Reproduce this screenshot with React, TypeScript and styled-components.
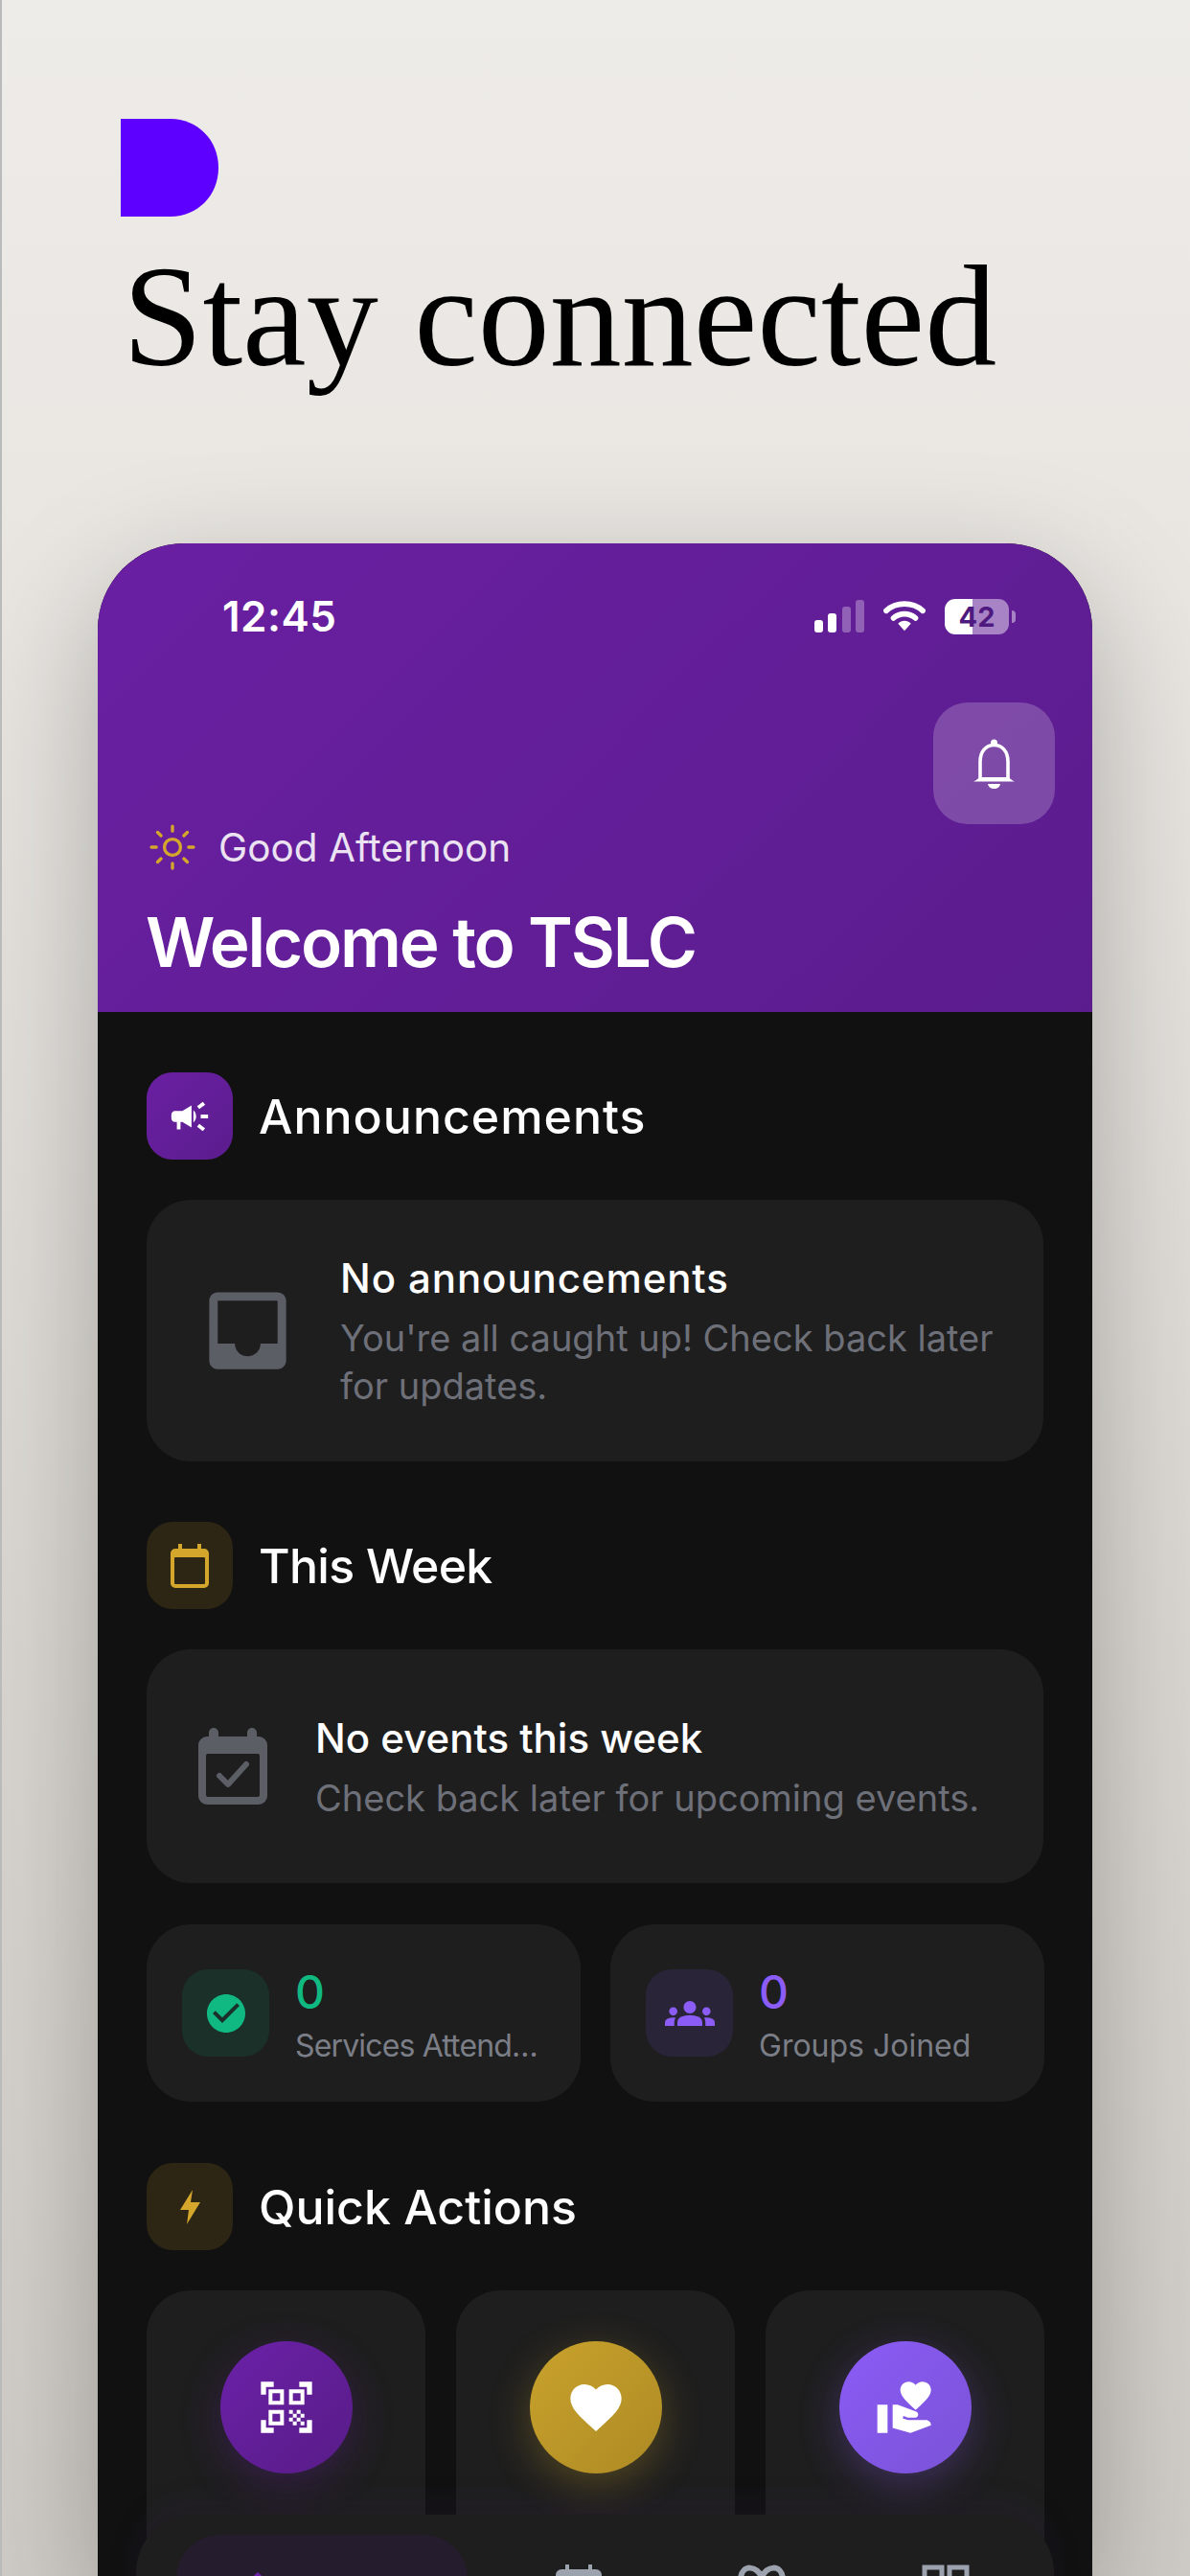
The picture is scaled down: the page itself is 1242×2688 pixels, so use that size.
import styled, { createGlobalStyle } from "styled-components";
import {
  MdCampaign,
  MdInbox,
  MdCheckCircle,
  MdGroups,
  MdQrCodeScanner,
  MdFavorite,
  MdVolunteerActivism,
  MdHome,
} from "react-icons/md";
import { IoSunnyOutline } from "react-icons/io5";

const GlobalStyle = createGlobalStyle`
  html, body {
    margin: 0;
    padding: 0;
    height: 2688px;
    overflow: hidden;
    background: #d8d5d0;
  }
  * { box-sizing: border-box; }
`;

const Page = styled.div`
  width: 1242px;
  height: 2688px;
  overflow: hidden;
  display: flex;
  flex-direction: column;
  padding: 124px 102px 0 126px;
  border-left: 2px solid #b9bbbb;
  background: linear-gradient(180deg, #eeece8 0%, #e8e5e1 25%, #d9d6d1 65%, #cfcbc6 100%);
  font-family: Inter, "Noto Sans", sans-serif;
`;

const Logo = styled.svg`
  width: 102px;
  height: 102px;
  margin-left: -2px;
  flex: none;
`;

const Headline = styled.h1`
  margin: 29px 0 0 0;
  font-family: "Liberation Serif", serif;
  font-weight: 400;
  font-size: 150px;
  line-height: 150px;
  color: #000;
  white-space: nowrap;
`;

const Phone = styled.div`
  width: 1038px;
  margin: 162px 0 0 -26px;
  flex: 1;
  border-radius: 90px 90px 0 0;
  background: #111111;
  box-shadow: 0 40px 130px rgba(0, 0, 0, 0.26);
  position: relative;
  overflow: hidden;
`;

const Header = styled.header`
  height: 489px;
  padding: 50px 39px 0 51px;
  display: flex;
  flex-direction: column;
  background: linear-gradient(135deg, #6a1fa2 0%, #5b1d8e 100%);
`;

const StatusBar = styled.div`
  height: 52px;
  display: flex;
  align-items: center;
  justify-content: space-between;
  padding: 0 48px 0 79px;
`;

const Time = styled.div`
  color: #fff;
  font-size: 44px;
  font-weight: 600;
  letter-spacing: 0.5px;
`;

const StatusIcons = styled.div`
  display: flex;
  align-items: center;
  gap: 20px;
`;

const Battery = styled.div`
  position: relative;
  width: 67px;
  height: 37px;
  border-radius: 11px;
  background: linear-gradient(90deg, #fff 0%, #fff 43%, rgba(255, 255, 255, 0.45) 43%);
  color: #4f1a80;
  font-size: 29px;
  font-weight: 700;
  line-height: 37px;
  text-align: center;
  &::after {
    content: "";
    position: absolute;
    right: -7px;
    top: 12px;
    width: 4px;
    height: 13px;
    border-radius: 0 4px 4px 0;
    background: rgba(255, 255, 255, 0.45);
  }
`;

const BellRow = styled.div`
  display: flex;
  justify-content: flex-end;
  margin-top: 64px;
`;

const BellButton = styled.div`
  width: 127px;
  height: 127px;
  border-radius: 36px;
  background: rgba(255, 255, 255, 0.2);
  display: flex;
  align-items: center;
  justify-content: center;
  color: #fff;
`;

const Greeting = styled.div`
  display: flex;
  align-items: center;
  gap: 21px;
  height: 48px;
  font-size: 40.5px;
  color: rgba(255, 255, 255, 0.88);
`;

const Welcome = styled.h2`
  margin: 32px 0 0 -1px;
  font-size: 71px;
  line-height: 86px;
  font-weight: 600;
  letter-spacing: -2.2px;
  color: #fff;
`;

const Content = styled.div`
  padding: 63px 51px 0;
  display: flex;
  flex-direction: column;
`;

const Section = styled.section`
  margin-bottom: 63px;
`;

const SectionHead = styled.div`
  display: flex;
  align-items: center;
  gap: 27px;
  margin-bottom: 42px;
`;

const HeadIcon = styled.div<{ $bg: string; $color: string }>`
  width: 90px;
  height: 91px;
  border-radius: 27px;
  background: ${({ $bg }) => $bg};
  color: ${({ $color }) => $color};
  display: flex;
  align-items: center;
  justify-content: center;
`;

const SectionTitle = styled.div<{ $tracking?: number }>`
  font-size: 50px;
  font-weight: 500;
  color: #fff;
  letter-spacing: ${({ $tracking }) => $tracking ?? 0}px;
`;

const EmptyCard = styled.div<{ $height: number; $gap: number; $left: number }>`
  height: ${({ $height }) => $height}px;
  padding-left: ${({ $left }) => $left}px;
  display: flex;
  align-items: center;
  gap: ${({ $gap }) => $gap}px;
  border-radius: 46px;
  background: #1e1e1e;
  color: #5c5e66;
`;

const EmptyBody = styled.div`
  padding-top: 3px;
`;

const EmptyTitle = styled.div<{ $tracking?: number }>`
  font-size: 42px;
  line-height: 50px;
  font-weight: 500;
  color: #fff;
  margin-bottom: 12px;
  letter-spacing: ${({ $tracking }) => $tracking ?? 0}px;
`;

const EmptyText = styled.div`
  font-size: 38px;
  line-height: 50px;
  color: #6e7079;
  white-space: nowrap;
`;

const Stats = styled.div`
  display: grid;
  grid-template-columns: 453px 453px;
  gap: 31px;
  margin: -20px 0 64px;
`;

const StatCard = styled.div`
  height: 185px;
  padding: 0 20px 0 37px;
  display: flex;
  align-items: center;
  gap: 27px;
  border-radius: 46px;
  background: #1e1e1e;
`;

const StatIcon = styled.div<{ $bg: string; $color: string }>`
  width: 91px;
  height: 91px;
  flex: none;
  border-radius: 27px;
  background: ${({ $bg }) => $bg};
  color: ${({ $color }) => $color};
  display: flex;
  align-items: center;
  justify-content: center;
`;

const StatBody = styled.div`
  padding-top: 5px;
`;

const StatValue = styled.div<{ $color: string }>`
  font-size: 48px;
  line-height: 60px;
  font-weight: 500;
  color: ${({ $color }) => $color};
`;

const StatLabel = styled.div<{ $tracking?: number }>`
  font-size: 32px;
  line-height: 44px;
  margin-top: 4px;
  color: #7b7e87;
  white-space: nowrap;
  letter-spacing: ${({ $tracking }) => $tracking ?? 0}px;
`;

const Actions = styled.div`
  display: grid;
  grid-template-columns: repeat(3, 291px);
  gap: 32px;
`;

const ActionCard = styled.div`
  height: 320px;
  padding-top: 53px;
  display: flex;
  justify-content: center;
  border-radius: 46px 46px 0 0;
  background: #1e1e1e;
`;

const ActionCircle = styled.div<{ $from: string; $to: string; $glow: string }>`
  width: 138px;
  height: 138px;
  border-radius: 50%;
  background: linear-gradient(135deg, ${({ $from }) => $from}, ${({ $to }) => $to});
  box-shadow: 0 12px 44px ${({ $glow }) => $glow};
  color: #fff;
  display: flex;
  align-items: center;
  justify-content: center;
`;

const NavBar = styled.nav`
  position: absolute;
  left: 40px;
  right: 40px;
  top: 2057px;
  height: 200px;
  border-radius: 60px 60px 0 0;
  background: #1e1e1e;
  box-shadow: 0 -14px 30px rgba(60, 30, 90, 0.12);
  display: flex;
  padding: 21px 0 0 42px;
`;

const ActiveTab = styled.div`
  width: 304px;
  height: 160px;
  border-radius: 46px;
  background: #251c2e;
  color: #6b21a8;
  display: flex;
  justify-content: flex-start;
  padding: 31px 0 0 53px;
`;

const NavIcons = styled.div`
  display: flex;
  gap: 142px;
  padding: 31px 0 0 92px;
  color: #9ca3af;
`;

const App = () => {
  return (
    <>
      <GlobalStyle />
      <Page>
        <Logo viewBox="0 0 102 102">
          <path d="M0 0H52C80 0 102 22 102 51C102 80 80 102 52 102H0Z" fill="#5e00ff" />
        </Logo>
        <Headline>Stay connected</Headline>
        <Phone>
          <Header>
            <StatusBar>
              <Time>12:45</Time>
              <StatusIcons>
                <svg width="52" height="34" viewBox="0 0 52 34">
                  <rect x="0" y="21" width="9" height="13" rx="3" fill="#fff" />
                  <rect x="14" y="14" width="9" height="20" rx="3" fill="#fff" />
                  <rect x="29" y="7" width="9" height="27" rx="3" fill="#fff" opacity=".3" />
                  <rect x="43" y="0" width="9" height="34" rx="3" fill="#fff" opacity=".3" />
                </svg>
                <svg width="44" height="34" viewBox="0 0 46 34">
                  <path d="M3 11C14 1 32 1 43 11" stroke="#fff" strokeWidth="6" fill="none" strokeLinecap="round" />
                  <path d="M11 19C18 13 28 13 35 19" stroke="#fff" strokeWidth="6" fill="none" strokeLinecap="round" />
                  <path d="M16 25C20 21 26 21 30 25L23 33Z" fill="#fff" />
                </svg>
                <Battery>42</Battery>
              </StatusIcons>
            </StatusBar>
            <BellRow>
              <BellButton>
                <svg width="43" height="52" viewBox="0 0 43 52">
                  <circle cx="21.5" cy="4" r="3.5" fill="currentColor" />
                  <path d="M7 42V24C7 13 13 6.5 21.5 6.5S36 13 36 24V42" fill="none" stroke="currentColor" strokeWidth="3.6" />
                  <path d="M0 44.5C3 43 5 41.5 6 40H37C38 41.5 40 43 43 44.5Z" fill="currentColor" />
                  <path d="M15 47H28C27.5 50 25 52 21.5 52S15.5 50 15 47Z" fill="currentColor" />
                </svg>
              </BellButton>
            </BellRow>
            <Greeting>
              <IoSunnyOutline size={54} color="#d4a72c" />
              Good Afternoon
            </Greeting>
            <Welcome>Welcome to TSLC</Welcome>
          </Header>
          <Content>
            <Section>
              <SectionHead>
                <HeadIcon $bg="linear-gradient(135deg, #6a1fa2, #5b1d8e)" $color="#fff">
                  <MdCampaign size={46} />
                </HeadIcon>
                <SectionTitle $tracking={1}>Announcements</SectionTitle>
              </SectionHead>
              <EmptyCard $height={273} $gap={43} $left={52}>
                <MdInbox size={107} />
                <EmptyBody>
                  <EmptyTitle $tracking={0.9}>No announcements</EmptyTitle>
                  <EmptyText>
                    You're all caught up! Check back later
                    <br />
                    for updates.
                  </EmptyText>
                </EmptyBody>
              </EmptyCard>
            </Section>
            <Section>
              <SectionHead>
                <HeadIcon $bg="#2e2614" $color="#d4a72c">
                  <svg width="42" height="46" viewBox="0 0 42 46">
                    <path d="M9 0h4v5h16V0h4v5h3a5 5 0 0 1 5 5v31a5 5 0 0 1-5 5H6a5 5 0 0 1-5-5V10a5 5 0 0 1 5-5h3Z" fill="currentColor" />
                    <rect x="5" y="14" width="32" height="28" rx="1" fill="#2e2614" />
                  </svg>
                </HeadIcon>
                <SectionTitle $tracking={-0.7}>This Week</SectionTitle>
              </SectionHead>
              <EmptyCard $height={244} $gap={50} $left={54}>
                <svg width="72" height="80" viewBox="0 0 72 80">
                  <path d="M16 0a5 5 0 0 1 5 5v4h30V5a5 5 0 0 1 10 0v4h2a9 9 0 0 1 9 9v53a9 9 0 0 1-9 9H9a9 9 0 0 1-9-9V18a9 9 0 0 1 9-9h2V5a5 5 0 0 1 5-5Z" fill="currentColor" />
                  <rect x="8" y="27" width="56" height="45" rx="2" fill="#1e1e1e" />
                  <path d="M22 50L31 59L50 38" fill="none" stroke="currentColor" strokeWidth="6" strokeLinecap="round" strokeLinejoin="round" />
                </svg>
                <EmptyBody>
                  <EmptyTitle>No events this week</EmptyTitle>
                  <EmptyText>Check back later for upcoming events.</EmptyText>
                </EmptyBody>
              </EmptyCard>
            </Section>
            <Stats>
              <StatCard>
                <StatIcon $bg="#1a3029" $color="#10b981">
                  <MdCheckCircle size={48} />
                </StatIcon>
                <StatBody>
                  <StatValue $color="#10b981">0</StatValue>
                  <StatLabel $tracking={-0.85}>Services Attend…</StatLabel>
                </StatBody>
              </StatCard>
              <StatCard>
                <StatIcon $bg="#2a2438" $color="#8b5cf6">
                  <MdGroups size={52} />
                </StatIcon>
                <StatBody>
                  <StatValue $color="#8b5cf6">0</StatValue>
                  <StatLabel>Groups Joined</StatLabel>
                </StatBody>
              </StatCard>
            </Stats>
            <Section>
              <SectionHead>
                <HeadIcon $bg="#2e2614" $color="#d4a72c">
                  <svg width="21" height="36" viewBox="0 0 21 36">
                    <path d="M13 0L0 21H9L7 36L21 13H11Z" fill="currentColor" />
                  </svg>
                </HeadIcon>
                <SectionTitle>Quick Actions</SectionTitle>
              </SectionHead>
              <Actions>
                <ActionCard>
                  <ActionCircle $from="#6b21a8" $to="#581c87" $glow="rgba(107, 33, 168, 0.3)">
                    <MdQrCodeScanner size={64} />
                  </ActionCircle>
                </ActionCard>
                <ActionCard>
                  <ActionCircle $from="#c9a22c" $to="#ad8a24" $glow="rgba(201, 162, 44, 0.3)">
                    <MdFavorite size={64} />
                  </ActionCircle>
                </ActionCard>
                <ActionCard>
                  <ActionCircle $from="#8b5cf6" $to="#7a52d6" $glow="rgba(139, 92, 246, 0.3)">
                    <MdVolunteerActivism size={64} />
                  </ActionCircle>
                </ActionCard>
              </Actions>
            </Section>
          </Content>
          <NavBar>
            <ActiveTab>
              <MdHome size={64} />
            </ActiveTab>
            <NavIcons>
              <svg width="48" height="50" viewBox="0 0 48 50">
                <path d="M10 0h4v5h20V0h4v5h4a6 6 0 0 1 6 6v8H0v-8a6 6 0 0 1 6-6h4Z" fill="currentColor" />
              </svg>
              <svg width="50" height="50" viewBox="0 0 50 50">
                <path d="M25 14C21 1 4 -1 3 15" fill="none" stroke="currentColor" strokeWidth="6" />
                <path d="M25 14C29 1 46 -1 47 15" fill="none" stroke="currentColor" strokeWidth="6" />
              </svg>
              <svg width="50" height="50" viewBox="0 0 50 50">
                <rect x="3" y="3" width="18" height="18" fill="none" stroke="currentColor" strokeWidth="5" />
                <rect x="29" y="3" width="18" height="18" fill="none" stroke="currentColor" strokeWidth="5" />
              </svg>
            </NavIcons>
          </NavBar>
        </Phone>
      </Page>
    </>
  );
};

export default App;
